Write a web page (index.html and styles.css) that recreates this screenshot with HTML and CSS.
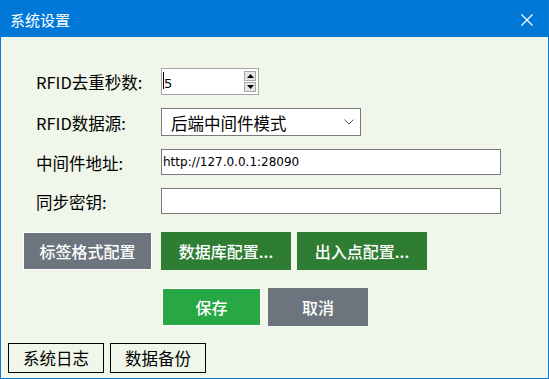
FILE: index.html
```html
<!DOCTYPE html>
<html lang="zh-CN">

<head>
  <meta charset="UTF-8" />
  <meta name="viewport" content="width=device-width, initial-scale=1.0" />
  <title>系统设置</title>
  <link rel="stylesheet" href="styles.css">
</head>

<body>
  <div class="window">
    <div class="title-bar">
      <span class="title">系统设置</span>
      <svg class="close" width="12" height="12" viewBox="0 0 12 12">
        <path d="M0.5 0.5 L11.5 11.5 M11.5 0.5 L0.5 11.5" stroke="#fff" stroke-width="1.2" fill="none" />
      </svg>
    </div>

    <div class="content">
      <div class="form">
        <label class="label">RFID去重秒数:</label>
        <div class="num-box">
          <span class="caret"></span>
          <span class="num-value">5</span>
          <div class="spin">
            <span class="spin-btn">
              <svg width="7" height="4" viewBox="0 0 7 4"><path d="M0 4 L3.5 0 L7 4 Z" fill="#000" /></svg>
            </span>
            <span class="spin-btn">
              <svg width="7" height="4" viewBox="0 0 7 4"><path d="M0 0 L3.5 4 L7 0 Z" fill="#000" /></svg>
            </span>
          </div>
        </div>

        <label class="label">RFID数据源:</label>
        <div class="select">
          <span>后端中间件模式</span>
          <svg width="10" height="6" viewBox="0 0 10 6">
            <path d="M0.5 0.5 L5 5 L9.5 0.5" stroke="#555" stroke-width="1" fill="none" />
          </svg>
        </div>

        <label class="label">中间件地址:</label>
        <div class="text-box">http://127.0.0.1:28090</div>

        <label class="label">同步密钥:</label>
        <div class="text-box"></div>
      </div>

      <div class="btn-row config-row">
        <button class="btn btn-gray btn-outline">标签格式配置</button>
        <button class="btn btn-dark-green">数据库配置...</button>
        <button class="btn btn-dark-green">出入点配置...</button>
      </div>

      <div class="btn-row action-row">
        <button class="btn btn-green btn-outline save">保存</button>
        <button class="btn btn-gray cancel">取消</button>
      </div>

      <div class="btn-row footer-row">
        <button class="btn-plain">系统日志</button>
        <button class="btn-plain">数据备份</button>
      </div>
    </div>
  </div>
</body>

</html>
```

FILE: styles.css
```css
body {
  margin: 0;
  font-family: "Noto Sans CJK SC", "Noto Sans", sans-serif;
}

.window {
  width: 549px;
  height: 379px;
  box-sizing: border-box;
  border: 1px solid #0a79d6;
  background: #f0f6e9;
  display: flex;
  flex-direction: column;
}

.title-bar {
  height: 36px;
  background: #0078d7;
  display: flex;
  align-items: center;
  justify-content: space-between;
  padding: 0 15px 0 9px;
}

.title {
  color: #fff;
  font-size: 15px;
  line-height: 1;
  padding-top: 1px;
}

.close {
  margin-top: 1px;
}

.content {
  padding-top: 31px;
}

.form {
  display: grid;
  grid-template-columns: 125px auto;
  grid-template-rows: 27px 28px 26px 26px;
  row-gap: 13px;
  align-items: center;
  padding-left: 35px;
}

.label {
  font-size: 16.5px;
  color: #000;
  line-height: 1;
  padding-top: 2px;
}

.num-box {
  width: 98px;
  height: 27px;
  box-sizing: border-box;
  border: 1px solid #a4a4a4;
  background: #fff;
  display: flex;
  align-items: center;
  position: relative;
}

.caret {
  position: absolute;
  left: 1px;
  top: 3px;
  width: 1px;
  height: 17px;
  background: #000;
}

.num-value {
  font-family: "DejaVu Sans", sans-serif;
  font-size: 13px;
  padding-left: 2px;
  flex: 1;
  margin-top: 4px;
}

.spin {
  display: flex;
  flex-direction: column;
  gap: 1px;
  margin-right: 2px;
}

.spin-btn {
  width: 12px;
  height: 10px;
  box-sizing: border-box;
  border: 1px solid #a8a8a8;
  background: #e5e5e5;
  display: flex;
  align-items: center;
  justify-content: center;
}

.select {
  width: 200px;
  height: 28px;
  box-sizing: border-box;
  border: 1px solid #7a7a7a;
  background: #fff;
  display: flex;
  align-items: center;
  justify-content: space-between;
  padding: 0 6px 0 9px;
  font-size: 16.5px;
}

.select span {
  padding-top: 2px;
}

.text-box {
  width: 340px;
  height: 26px;
  box-sizing: border-box;
  border: 1px solid #7a7a7a;
  background: #fff;
  font-family: "DejaVu Sans", sans-serif;
  font-size: 12px;
  line-height: 24px;
  padding-left: 1px;
}

.btn-row {
  display: flex;
}

.config-row {
  margin-top: 18px;
  padding-left: 22px;
  gap: 6px;
}

.action-row {
  margin-top: 18px;
  padding-left: 161px;
  gap: 7px;
}

.footer-row {
  margin-top: 17px;
  padding-left: 7px;
  gap: 6px;
}

.btn {
  height: 38px;
  width: 130px;
  border: none;
  color: #fff;
  font-family: "Noto Sans CJK SC", sans-serif;
  font-size: 16px;
  font-weight: 500;
  padding: 0;
  cursor: pointer;
}

.btn-outline {
  border: 1px solid #fff;
}

.btn-gray {
  background: #6c757d;
}

.btn-dark-green {
  background: #2e7d32;
}

.btn-green {
  background: #28a745;
}

.config-row .btn-gray {
  width: 129px;
  margin-right: 3px;
}

.save {
  width: 99px;
}

.cancel {
  width: 100px;
}

.btn-plain {
  width: 96px;
  height: 30px;
  border: 1px solid #000;
  background: transparent;
  font-family: "Noto Sans CJK SC", sans-serif;
  font-size: 16.5px;
  color: #000;
  padding: 0;
  cursor: pointer;
}
```
